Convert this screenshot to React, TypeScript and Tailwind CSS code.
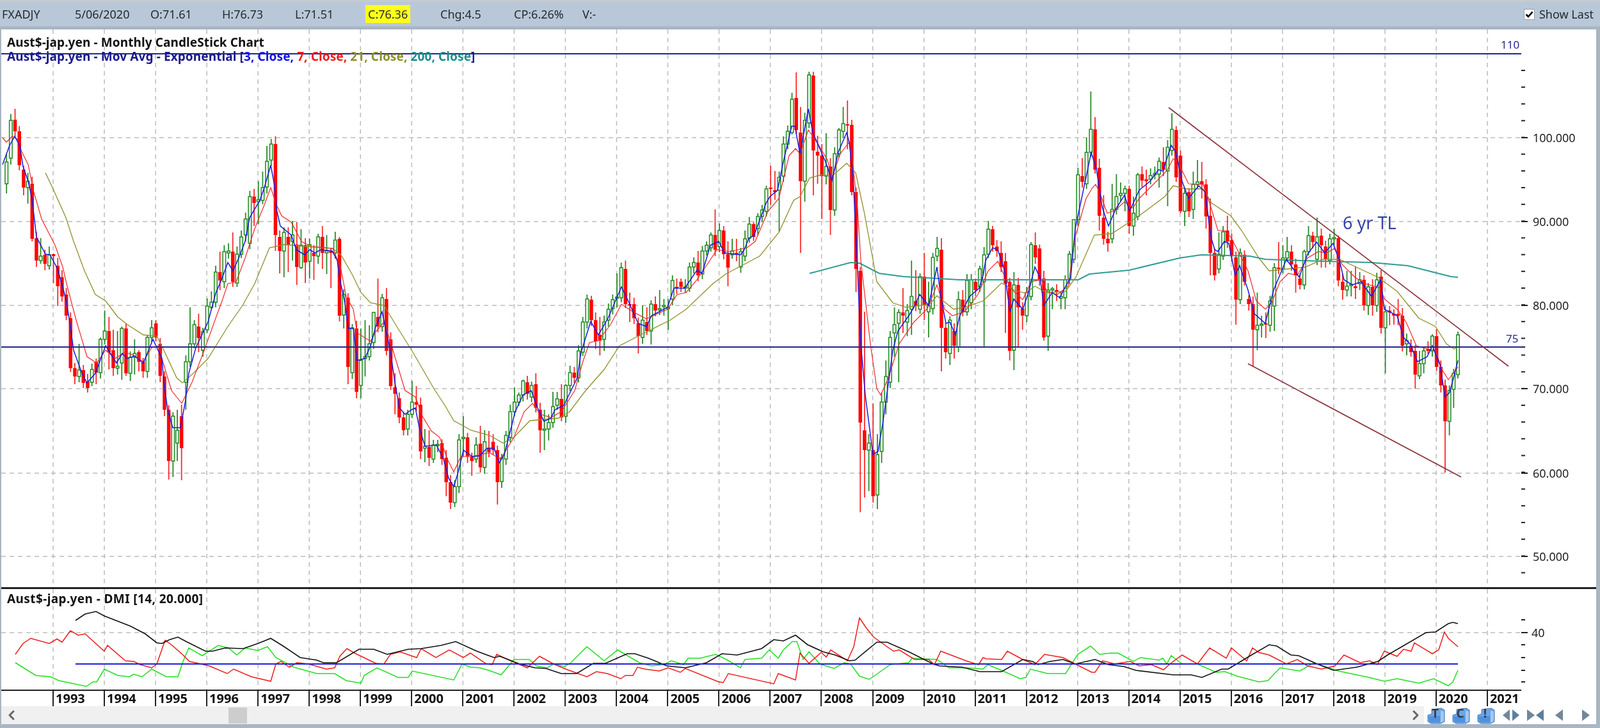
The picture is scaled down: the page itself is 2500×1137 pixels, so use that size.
import React from 'react';
import { ChevronLeft, ChevronRight } from 'lucide-react';

// all chart data below is in page pixels, the svgs use a viewBox that matches the page
const GRID_X = Array.from({ length: 29 }, (_, i) => 83 + i * 80.04);
const GRID_Y = [215, 346, 477, 607, 739, 869];
const YEARS = Array.from({ length: 29 }, (_, i) => 1993 + i);
const PRICE_LABELS = ['100.000', '90.000', '80.000', '70.000', '60.000', '50.000'];
const MINOR_TICKS = Array.from({ length: 31 }, (_, i) => 110 + i * 26.15);
const LOWER_TICKS = [968, 1007, 1027, 1047, 1065];

const QUOTE_CELLS = [
  { text: 'FXADJY', w: 'w-[114px]' },
  { text: '5/06/2020', w: 'w-[118px]' },
  { text: 'O:71.61', w: 'w-[112px]' },
  { text: 'H:76.73', w: 'w-[114px]' },
  { text: 'L:71.51', w: 'w-[110px]' },
  { text: 'C:76.36', w: 'w-[117px]', hot: true },
  { text: 'Chg:4.5', w: 'w-[115px]' },
  { text: 'CP:6.26%', w: 'w-[107px]' },
  { text: 'V:-', w: 'w-[60px]' },
];

// [x, green?, bodyTop, bodyBottom, high, low]  0 = default wick
const CANDLES: number[][] = [
  [3,0,260,290,0,332],[10,1,253,287,240,302],[16,1,188,247,178,0],[23,0,187,205,170,0],[30,0,205,258,197,0],[36,0,265,293,0,305],[43,1,283,293,270,318],
  [50,0,287,373,0,377],[57,0,372,407,0,417],[63,1,400,407,372,412],[70,0,398,412,0,422],[77,1,398,415,385,0],[83,0,397,400,396,442],[90,0,415,447,0,478],
  [96,0,433,463,0,0],[103,0,460,493,0,0],[110,0,497,575,488,0],[116,0,575,588,0,600],[123,1,578,588,537,0],[130,0,578,598,570,0],[137,0,596,606,0,0],
  [143,1,577,597,568,0],[150,0,565,582,560,600],[156,1,530,582,527,0],[163,1,517,530,485,0],[170,0,517,550,495,577],[176,0,547,575,515,587],[183,1,572,575,517,585],
  [190,1,513,567,510,593],[197,0,513,583,505,587],[204,1,558,583,0,595],[210,1,552,558,530,585],[217,0,550,565,547,580],[223,0,565,580,0,590],[230,1,527,580,523,590],
  [237,1,512,527,500,0],[243,0,505,527,500,533],[250,0,537,587,0,0],[256,0,588,640,0,650],[263,0,640,720,0,749],[270,1,650,720,0,745],[277,1,672,692,640,720],
  [283,0,650,700,632,750],[290,1,565,597,0,640],[297,1,537,565,480,0],[303,1,507,537,500,0],[310,0,510,528,490,550],[317,1,518,547,0,0],[323,1,478,515,0,520],
  [330,1,472,480,455,483],[337,1,425,472,0,480],[343,0,425,438,393,453],[350,1,393,440,383,0],[357,1,392,395,380,0],[364,0,393,440,363,0],[370,1,397,442,0,448],
  [377,1,370,397,360,0],[383,1,342,367,332,0],[390,1,307,380,0,0],[397,0,307,317,295,353],[403,1,312,315,283,350],[410,1,293,313,268,0],[417,1,252,292,228,0],
  [423,1,225,250,217,0],[430,0,225,367,213,392],[437,0,370,392,360,427],[443,1,363,392,0,433],[450,0,370,383,355,425],[457,1,367,377,345,407],[463,0,382,417,347,445],
  [470,1,383,418,358,420],[477,0,383,410,372,442],[483,1,382,408,0,435],[490,0,395,400,383,437],[497,1,370,400,365,412],[503,0,370,395,353,420],[510,1,392,395,367,428],
  [517,0,392,395,387,450],[523,1,375,395,362,0],[530,0,373,493,370,502],[537,1,460,492,0,513],[543,0,465,573,0,600],[550,1,512,582,0,0],[557,0,513,612,0,622],
  [563,1,563,602,513,622],[570,1,557,560,500,588],[577,1,537,557,508,0],[584,1,488,535,487,0],[590,0,495,510,435,0],[597,1,465,510,0,0],[604,0,467,548,450,0],
  [610,0,530,603,0,0],[616,0,605,615,583,647],[623,0,622,652,0,0],[630,0,652,672,0,680],[637,1,647,670,0,680],[643,1,628,647,595,0],[650,0,628,632,603,0],
  [657,0,632,705,0,717],[663,1,697,700,670,722],[670,0,698,715,672,728],[677,1,695,717,0,0],[684,1,694,696,0,0],[690,0,692,717,0,0],[697,0,715,753,0,775],
  [704,0,753,785,0,795],[710,1,760,785,0,792],[717,1,687,760,0,0],[724,1,683,685,650,713],[730,0,683,713,0,723],[737,0,713,720,0,743],[744,1,695,717,0,0],
  [750,0,693,730,665,738],[757,1,690,730,672,740],[764,0,700,706,673,0],[770,0,690,703,678,0],[777,0,703,753,0,788],[784,1,715,752,0,0],[790,1,680,717,673,0],
  [797,1,643,683,0,0],[803,1,628,643,605,0],[810,1,617,628,613,0],[817,1,595,617,593,0],[823,0,597,615,587,0],[830,1,602,620,0,0],[837,0,600,637,583,0],
  [844,0,640,672,0,707],[850,1,670,672,640,703],[857,1,660,670,647,688],[864,1,635,660,612,0],[871,1,623,633,612,0],[877,0,623,652,600,0],[884,1,602,650,600,0],
  [890,1,582,602,0,0],[897,0,582,590,573,0],[904,1,548,590,0,0],[910,1,503,550,0,0],[917,1,467,503,0,0],[923,0,468,500,462,0],[930,0,500,533,488,545],
  [937,0,523,532,495,555],[944,1,503,530,0,548],[950,1,483,500,0,0],[957,1,468,482,0,0],[964,1,464,466,427,480],[970,1,418,465,410,0],[977,0,420,475,407,0],
  [983,0,475,477,457,503],[990,0,475,497,0,0],[997,0,505,525,0,552],[1004,1,500,527,477,537],[1010,0,503,517,480,0],[1017,1,475,517,0,538],[1024,0,475,485,463,0],
  [1030,1,482,484,453,0],[1037,1,477,479,467,493],[1044,1,480,482,467,515],[1050,1,438,467,430,0],[1057,0,448,450,435,0],[1063,0,440,448,435,0],[1070,1,448,450,0,0],
  [1077,1,417,450,410,0],[1083,1,410,417,402,0],[1090,0,410,430,392,0],[1097,1,392,428,0,0],[1103,1,383,392,377,0],[1110,1,367,387,363,0],[1117,0,367,390,327,0],
  [1123,1,360,385,0,0],[1130,0,360,397,353,0],[1137,0,397,418,377,447],[1143,1,392,398,373,0],[1150,0,395,398,373,0],[1157,1,393,417,0,0],[1163,1,373,400,360,0],
  [1170,1,350,372,0,0],[1177,0,350,370,347,0],[1183,1,338,357,333,0],[1190,1,328,338,0,0],[1197,1,295,330,290,0],[1203,0,293,295,259,320],[1210,0,297,300,267,312],
  [1217,1,277,297,268,362],[1224,1,225,275,213,0],[1230,1,205,225,0,0],[1237,1,155,207,145,210],[1244,0,153,203,113,0],[1250,0,207,283,167,395],[1257,1,188,283,0,315],
  [1263,1,117,192,112,0],[1271,0,118,235,112,305],[1277,0,237,243,212,287],[1284,0,243,275,225,342],[1291,1,260,275,208,288],[1297,0,260,328,247,367],[1304,1,240,328,230,337],
  [1311,1,203,240,200,0],[1317,1,193,205,167,0],[1324,0,194,196,157,233],[1331,0,195,300,0,305],[1337,0,300,420,0,456],[1345,0,423,660,0,800],[1350,0,672,703,487,777],
  [1357,1,692,703,678,767],[1364,0,703,775,630,785],[1370,1,710,773,678,795],[1377,1,628,705,613,723],[1384,1,588,628,563,647],[1390,1,527,597,517,0],[1397,1,507,520,480,557],
  [1404,1,488,505,483,597],[1411,0,488,493,450,520],[1417,1,485,503,475,525],[1424,1,463,483,407,523],[1431,0,470,478,422,0],[1437,1,432,483,427,0],[1444,0,432,477,395,500],
  [1451,1,477,487,440,527],[1457,1,402,482,395,0],[1464,1,388,400,370,0],[1471,0,390,512,372,580],[1477,0,512,550,0,560],[1484,1,500,552,0,570],[1491,0,517,540,0,560],
  [1498,1,468,542,455,0],[1504,0,468,487,453,0],[1511,1,438,487,428,0],[1517,1,437,473,428,0],[1524,0,440,453,435,0],[1530,1,420,448,415,0],[1537,1,398,440,0,542],
  [1544,1,358,397,345,0],[1551,0,358,383,353,0],[1558,0,385,392,375,0],[1564,0,395,417,377,0],[1570,0,408,443,395,520],[1577,0,440,548,0,563],[1584,1,445,547,425,578],
  [1591,0,445,480,0,543],[1597,0,482,493,0,515],[1604,1,457,493,0,503],[1611,1,382,463,378,0],[1617,0,383,402,363,0],[1624,0,388,437,0,0],[1631,0,435,527,0,532],
  [1637,1,453,525,0,548],[1644,1,451,453,448,483],[1651,0,453,456,0,470],[1657,1,463,466,0,483],[1664,1,437,465,430,483],[1671,1,397,437,392,0],[1677,1,343,405,343,0],
  [1684,1,273,343,0,0],[1691,0,275,284,247,0],[1697,1,238,287,215,0],[1704,1,202,238,143,0],[1711,0,202,265,183,0],[1717,0,262,337,248,360],[1724,0,340,373,305,0],
  [1731,0,373,380,0,393],[1737,1,327,373,287,0],[1744,1,307,327,272,335],[1751,1,302,305,285,0],[1757,1,295,302,290,330],[1764,0,295,353,290,365],[1771,1,333,353,307,368],
  [1777,1,273,338,270,0],[1784,0,272,282,260,0],[1791,0,280,283,265,305],[1797,1,274,280,263,0],[1804,1,271,273,260,0],[1811,1,252,272,0,293],[1817,0,253,265,230,0],
  [1824,1,230,267,0,322],[1831,1,202,235,177,0],[1837,0,203,277,197,0],[1844,0,243,330,0,333],[1851,1,302,330,293,353],[1857,0,300,330,0,0],[1864,1,288,327,268,342],
  [1871,1,284,288,250,0],[1877,0,283,288,253,310],[1884,0,288,338,280,357],[1891,0,337,395,310,430],[1897,0,395,430,0,0],[1904,1,397,420,363,0],[1911,1,362,400,353,0],
  [1917,0,360,377,337,0],[1924,0,375,400,0,0],[1931,0,402,468,0,507],[1937,1,395,468,388,0],[1944,0,398,440,0,0],[1951,0,467,475,0,0],[1957,0,475,515,0,572],
  [1964,1,508,515,457,547],[1971,1,506,508,493,527],[1977,0,505,507,488,528],[1984,1,470,508,0,0],[1991,1,418,478,0,517],[1997,0,418,420,378,0],[2004,1,403,420,383,0],
  [2011,1,393,403,370,0],[2017,0,393,413,0,0],[2024,0,413,430,0,457],[2031,0,435,445,0,452],[2037,1,393,445,390,0],[2044,1,368,393,353,0],[2051,0,368,378,362,0],
  [2057,1,370,405,340,0],[2064,0,368,383,357,418],[2071,0,385,405,0,418],[2077,1,373,407,0,413],[2084,1,371,373,357,0],[2091,0,372,438,368,0],[2097,0,440,453,0,468],
  [2104,1,447,453,423,463],[2111,1,444,446,423,463],[2117,0,447,450,417,467],[2124,1,437,443,425,453],[2131,0,437,477,0,0],[2137,1,448,477,0,492],[2144,0,448,477,0,493],
  [2151,1,437,477,0,0],[2157,0,432,512,422,0],[2164,1,487,512,0,583],[2171,0,485,488,478,508],[2177,0,490,493,0,507],[2184,0,490,493,467,508],[2191,0,493,540,0,0],
  [2197,1,532,537,0,555],[2204,0,540,550,0,0],[2211,0,548,585,0,607],[2217,1,568,587,548,592],[2224,1,548,568,0,583],[2231,0,545,548,533,553],[2237,1,525,548,522,557],
  [2244,0,525,573,0,0],[2251,0,573,602,0,613],[2257,0,602,658,0,738],[2264,1,610,658,0,680],[2271,1,583,608,0,637],[2277,1,523,585,518,0],
];

const EMA3 = '4,257 15,227 23,213 31,228 36,260 44,283 50,310 57,370 71,397 78,398 90,420 103,467 109,503 115,547 128,583 136,598 149,583 165,540 182,567 191,552 199,560 210,556 224,567 239,530 253,560 256,597 262,640 270,668 282,668 290,625 295,583 306,543 325,503 337,458 346,437 356,410 364,423 373,403 383,377 390,340 406,313 413,293 423,258 429,290 432,327 438,353 455,367 463,390 476,398 484,390 492,395 501,390 519,392 527,407 531,437 539,473 544,513 552,513 558,563 570,560 579,540 587,510 597,487 604,520 610,550 618,603 624,637 633,647 643,640 649,637 655,667 664,697 682,695 693,717 701,747 709,760 716,737 724,703 738,713 749,712 761,700 772,700 780,723 788,710 805,643 817,617 830,610 840,637 850,658 861,653 867,640 881,633 902,590 908,550 923,502 935,523 950,497 971,448 983,473 997,505 1010,510 1018,493 1043,480 1053,450 1070,450 1089,422 1097,427 1110,383 1123,377 1132,395 1157,398 1163,390 1170,372 1178,368 1197,317 1203,307 1215,297 1223,257 1237,197 1242,197 1250,240 1263,170 1270,207 1290,253 1300,282 1310,237 1323,207 1327,223 1333,277 1339,400 1345,537 1352,617 1364,710 1372,705 1379,663 1387,607 1395,547 1403,517 1420,493 1428,480 1437,460 1451,477 1464,417 1470,463 1478,505 1484,503 1493,523 1499,495 1515,463 1530,450 1536,430 1540,407 1551,387 1559,390 1569,420 1578,487 1584,467 1598,483 1606,460 1617,417 1625,433 1631,477 1644,457 1656,465 1665,447 1673,433 1680,357 1690,310 1705,238 1713,263 1722,323 1732,353 1743,327 1757,305 1765,330 1780,297 1797,283 1810,265 1817,267 1830,227 1837,237 1847,283 1857,310 1873,290 1883,300 1892,370 1898,390 1903,393 1913,377 1920,380 1930,430 1937,415 1950,453 1960,490 1977,505 1990,453 2010,405 2030,433 2043,397 2057,378 2070,395 2083,380 2093,407 2100,437 2113,445 2127,440 2143,463 2157,437 2163,483 2183,493 2193,527 2203,537 2215,565 2230,557 2238,540 2250,570 2258,620 2265,613 2272,587 2278,563';
const EMA7 = '4,215 10,222 19,213 27,217 34,237 44,257 52,297 65,342 86,383 98,417 105,447 119,500 136,557 151,567 165,547 180,560 195,550 209,555 224,565 237,543 249,540 253,560 268,610 284,630 300,597 318,550 337,497 348,467 356,443 369,440 383,403 398,357 413,320 423,293 432,320 440,337 455,347 471,377 486,385 520,388 532,417 541,463 552,483 558,520 579,533 587,518 600,503 608,527 620,567 633,610 649,620 660,650 674,673 687,683 699,717 709,737 720,713 736,713 765,707 782,717 803,683 819,643 832,630 844,647 861,652 877,643 898,610 910,567 921,535 935,532 954,507 971,475 989,487 1010,498 1043,483 1058,460 1072,457 1089,437 1109,407 1120,390 1140,393 1167,387 1180,377 1200,330 1217,310 1233,243 1243,232 1250,240 1263,203 1277,223 1293,250 1300,277 1313,240 1327,222 1333,260 1340,327 1345,407 1360,537 1370,607 1376,617 1387,593 1405,537 1428,503 1449,482 1464,445 1476,483 1488,493 1507,487 1528,460 1544,423 1559,408 1569,430 1582,453 1598,468 1611,440 1627,437 1636,455 1652,460 1669,447 1680,370 1697,310 1707,293 1712,288 1718,300 1730,333 1743,328 1757,315 1770,325 1780,310 1790,300 1807,283 1823,267 1833,248 1840,252 1857,287 1880,288 1890,317 1903,360 1913,360 1923,370 1937,397 1950,423 1963,470 1977,483 1987,473 2000,440 2013,427 2027,430 2043,403 2060,393 2073,395 2085,388 2097,413 2117,433 2133,443 2157,450 2163,467 2183,483 2197,503 2213,540 2230,545 2243,547 2253,577 2263,593 2278,573';
const EMA21 = '71,270 82,293 103,340 115,377 132,423 149,460 165,470 184,495 199,507 224,523 245,525 256,547 276,590 285,598 302,583 325,560 356,510 379,477 398,443 421,387 444,382 478,385 520,388 534,400 551,430 564,457 579,473 600,477 620,510 645,550 678,607 695,633 709,657 736,672 765,680 786,692 803,683 828,657 873,653 890,643 915,610 944,577 968,540 997,525 1047,500 1072,483 1114,443 1134,428 1187,400 1217,363 1240,313 1250,307 1265,278 1283,273 1300,275 1323,255 1337,270 1350,330 1363,400 1370,440 1395,473 1416,480 1453,475 1464,462 1490,483 1507,480 1536,470 1565,442 1582,452 1602,458 1617,447 1636,457 1665,455 1681,433 1710,367 1737,365 1763,348 1780,337 1820,307 1833,290 1853,295 1880,295 1893,317 1923,337 1940,360 1967,403 1983,423 2013,420 2040,417 2067,405 2093,405 2153,433 2183,455 2217,497 2243,510 2260,537 2272,545 2278,542';
const EMA200 = '1265,427 1329,410 1343,411 1374,427 1412,432 1466,435 1499,437 1594,437 1685,437 1702,428 1764,422 1843,403 1877,398 1953,400 1977,405 2033,407 2143,410 2200,415 2267,432 2278,433';

const DMI_BLACK = '118,969 133,959 150,955 163,962 204,978 227,990 245,1004 253,1005 265,999 278,995 291,1002 321,1017 332,1017 352,1012 380,1013 403,1005 423,997 444,1010 469,1027 495,1031 505,1035 526,1035 561,1014 584,1014 605,1022 638,1014 658,1013 689,1008 712,1002 745,1017 772,1027 781,1025 812,1037 836,1043 853,1044 877,1052 901,1052 927,1036 946,1036 980,1021 992,1021 1013,1028 1042,1040 1071,1043 1104,1035 1128,1021 1152,1023 1190,1013 1209,999 1224,1001 1243,992 1262,1007 1286,1018 1305,1023 1327,1032 1336,1031 1370,1003 1386,1003 1420,1018 1458,1037 1468,1040 1503,1042 1531,1049 1565,1049 1598,1030 1613,1033 1622,1038 1641,1033 1661,1030 1680,1037 1711,1030 1732,1038 1756,1041 1775,1047 1833,1054 1861,1054 1878,1058 1909,1045 1919,1045 1952,1025 1983,1007 1995,1009 2017,1023 2029,1024 2058,1037 2084,1047 2120,1042 2153,1033 2168,1023 2187,1012 2228,988 2243,987 2263,974 2270,972 2278,974';
const DMI_RED = '24,1022 36,1005 48,997 77,1005 89,998 97,1003 110,985 122,992 133,990 163,1017 168,1008 196,1032 209,1033 219,1038 237,1043 245,1037 258,1000 268,1007 286,1023 296,1033 327,1040 355,1052 365,1045 393,1057 423,1064 431,1037 439,1033 452,1042 464,1035 482,1037 510,1045 523,1043 531,1025 542,1013 554,1020 587,1036 600,1037 610,1022 625,1018 651,1027 658,1013 681,1027 702,1015 724,1027 735,1020 760,1037 769,1038 776,1022 798,1032 824,1043 843,1025 865,1037 884,1045 917,1057 932,1049 949,1052 970,1060 977,1055 989,1055 996,1042 1008,1045 1030,1048 1044,1043 1063,1050 1071,1044 1123,1065 1130,1066 1138,1052 1209,1068 1216,1052 1243,1062 1250,1020 1264,1036 1283,1019 1291,1026 1298,1015 1324,1032 1334,1010 1343,965 1353,980 1365,995 1396,1017 1405,1015 1429,1030 1451,1030 1460,1038 1470,1017 1512,1033 1529,1038 1536,1027 1541,1029 1565,1030 1574,1017 1598,1030 1617,1038 1632,1022 1661,1027 1680,1037 1706,1050 1711,1050 1723,1032 1742,1037 1766,1033 1780,1040 1799,1038 1818,1046 1828,1037 1847,1023 1871,1037 1890,1012 1916,1028 1924,1012 1948,1032 1957,1012 1967,1019 1983,1023 2010,1037 2027,1030 2043,1040 2065,1045 2086,1040 2100,1023 2125,1035 2140,1032 2152,1038 2163,1017 2183,1025 2193,1014 2205,1017 2210,1004 2238,1021 2248,1015 2257,987 2263,997 2278,1010';
const DMI_GREEN = '24,1035 56,1055 79,1057 92,1063 135,1072 145,1065 151,1065 163,1045 184,1055 202,1057 209,1053 222,1057 237,1045 260,1057 278,1057 286,1033 295,1012 316,1024 341,1008 357,1012 370,1023 383,1012 403,1016 418,1010 431,1027 459,1042 495,1052 523,1052 541,1063 564,1067 569,1055 589,1043 622,1058 638,1058 644,1048 709,1062 722,1037 735,1042 750,1043 764,1047 783,1054 803,1030 827,1030 838,1040 855,1043 865,1037 882,1041 891,1036 917,1010 944,1032 965,1015 999,1035 1018,1040 1037,1038 1049,1032 1068,1038 1075,1028 1094,1028 1118,1022 1135,1030 1157,1043 1164,1030 1190,1028 1202,1015 1216,1028 1224,1015 1238,1002 1245,1002 1255,1030 1264,1018 1281,1037 1303,1044 1319,1035 1329,1037 1343,1056 1358,1061 1367,1055 1391,1038 1420,1035 1425,1028 1464,1030 1483,1043 1512,1043 1536,1045 1543,1038 1565,1047 1594,1060 1603,1058 1610,1045 1637,1052 1665,1052 1684,1022 1704,1009 1718,1022 1735,1020 1747,1020 1771,1033 1782,1027 1811,1031 1817,1028 1823,1037 1830,1024 1847,1037 1871,1037 1900,1050 1914,1049 1933,1056 1967,1065 1981,1063 2000,1043 2031,1048 2053,1035 2091,1048 2139,1058 2163,1064 2183,1060 2217,1067 2240,1060 2263,1071 2270,1065 2278,1047';

// months nobody read off get a small candle on the blue line
function pointsToXY(pts: string) {
  return pts.split(' ').map(p => p.split(',').map(Number));
}
function yOnLine(line: number[][], x: number) {
  for (let i = 1; i < line.length; i++) {
    if (x <= line[i][0]) {
      const [x0, y0] = line[i - 1];
      const [x1, y1] = line[i];
      return y0 + ((y1 - y0) * (x - x0)) / (x1 - x0);
    }
  }
  return line[line.length - 1][1];
}
function buildCandles() {
  const blue = pointsToXY(EMA3);
  const byMonth = new Map<number, number[]>();
  CANDLES.forEach(c => byMonth.set(Math.round((2278 - c[0]) / 6.67), c));
  const rows: number[][] = [];
  for (let m = 0; m < 341; m++) {
    const x = 2278 - m * 6.67;
    const c = byMonth.get(m);
    if (c) {
      const hi = c[4] || c[2] - 6 - (m % 7);
      const lo = c[5] || c[3] + 6 + (m % 5);
      rows.push([x, c[1], c[2], c[3], hi, lo]);
    } else {
      const y = yOnLine(blue, x);
      rows.push([x, m % 2, y - 5, y + 5, y - 14, y + 14]);
    }
  }
  return rows;
}

const Candles = () => (
  <g>
    {buildCandles().map(([x, up, top, bot, hi, lo]) =>
      up ? (
        <g key={x}>
          <line x1={x} x2={x} y1={hi} y2={lo} stroke="#2a8a2a" strokeWidth="1.8" />
          <rect x={x - 2.25} y={top} width="4.5" height={bot - top} fill="#f6fbf6" stroke="#1f8a1f" strokeWidth="1.5" />
        </g>
      ) : (
        <g key={x}>
          <line x1={x} x2={x} y1={hi} y2={lo} stroke="#fb2a2a" strokeWidth="1.8" />
          <rect x={x - 2.75} y={top} width="5.5" height={bot - top} fill="#ff0606" />
        </g>
      ),
    )}
  </g>
);

const VGrid = ({ y1, y2 }: { y1: number; y2: number }) => (
  <g stroke="#bcbcbc" strokeWidth="1.5" strokeDasharray="7 6">
    {GRID_X.map(x => (
      <line key={x} x1={x} x2={x} y1={y1} y2={y2} />
    ))}
  </g>
);

const HGrid = ({ y }: { y: number }) => (
  <line x1="2" x2="2377" y1={y} y2={y} stroke="#bcbcbc" strokeWidth="1.5" strokeDasharray="7 6" />
);

const PriceChart = () => (
  <svg viewBox="2 46 2492 871" className="block w-full h-[871px]">
    <VGrid y1={46} y2={917} />
    {GRID_Y.map(y => (
      <HGrid key={y} y={y} />
    ))}
    <Candles />
    <polyline points={EMA200} fill="none" stroke="#2f9c96" strokeWidth="2" />
    <polyline points={EMA21} fill="none" stroke="#8f8f2b" strokeWidth="1.3" />
    <polyline points={EMA7} fill="none" stroke="#f2282a" strokeWidth="1.2" />
    <polyline points={EMA3} fill="none" stroke="#1a1ae6" strokeWidth="1.5" />
    <line x1="2" x2="2377" y1="84" y2="84" stroke="#26268f" strokeWidth="2" />
    <line x1="2" x2="2377" y1="542" y2="542" stroke="#26268f" strokeWidth="2" />
    <line x1="1826" y1="168" x2="2357" y2="572" stroke="#8a2f38" strokeWidth="1.6" />
    <line x1="1950" y1="568" x2="2283" y2="745" stroke="#8a2f38" strokeWidth="1.6" />
    <text x="2098" y="358" fontSize="27" fill="#3542a6">6 yr TL</text>
    <text x="2345" y="76" fontSize="17" fill="#26268f">110</text>
    <text x="2353" y="535" fontSize="17" fill="#26268f">75</text>
    {MINOR_TICKS.map(y => (
      <line key={y} x1="2377" x2="2383" y1={y} y2={y} stroke="#222" strokeWidth="2" />
    ))}
    <line x1="2377" x2="2383" y1="542" y2="542" stroke="#222" strokeWidth="2" />
    {GRID_Y.map((y, i) => (
      <g key={y}>
        <line x1="2377" x2="2387" y1={y} y2={y} stroke="#222" strokeWidth="2" />
        <text x="2395" y={y + 7} fontSize="18" fill="#222">{PRICE_LABELS[i]}</text>
      </g>
    ))}
  </svg>
);

const DmiChart = () => (
  <svg viewBox="2 920 2492 157" className="block w-full h-[157px]">
    <VGrid y1={920} y2={1077} />
    <HGrid y={988} />
    <polyline points={DMI_GREEN} fill="none" stroke="#1fe01f" strokeWidth="1.5" />
    <polyline points={DMI_RED} fill="none" stroke="#ee1c1c" strokeWidth="1.5" />
    <polyline points={DMI_BLACK} fill="none" stroke="#111" strokeWidth="1.6" />
    <line x1="118" x2="2278" y1="1037" y2="1037" stroke="#2020dc" strokeWidth="2.2" />
    {LOWER_TICKS.map(y => (
      <line key={y} x1="2377" x2="2383" y1={y} y2={y} stroke="#222" strokeWidth="2" />
    ))}
    <line x1="2377" x2="2387" y1="988" y2="988" stroke="#222" strokeWidth="2" />
    <text x="2393" y="995" fontSize="18" fill="#222">40</text>
  </svg>
);

const LetterBox = ({ letter }: { letter: string }) => (
  <div className="relative w-[28px] h-[27px]">
    <svg width="28" height="27" viewBox="0 0 28 27" className="block">
      <path d="M1 13 L7 11 L7 4 L22 2 L27 5 L27 23 L21 26 L6 26 L1 23 Z" fill="#6ba6e8" stroke="#4a7db8" strokeWidth="1" />
      <path d="M2 15 L20 14 L20 24 L4 24 Z" fill="#4e92e0" />
      <path d="M21 6 L26 7 L26 22 L21 25 Z" fill="#a4c9ef" />
    </svg>
    <span className="absolute left-0 top-[1px] w-[25px] text-center text-[19px] leading-[19px] font-bold text-[#3d3d44]">{letter}</span>
  </div>
);

const NavIcon = ({ points, width }: { points: string[]; width: number }) => (
  <svg width={width} height="18" viewBox={`0 0 ${width} 18`} className="block">
    {points.map((p, i) => (
      <polygon key={p} points={p} fill={i === 0 ? '#71879b' : '#5d7f9f'} />
    ))}
  </svg>
);

export default function App() {
  return (
    <div className="h-screen w-full overflow-hidden flex flex-col bg-[#a9b6c3] font-['Liberation_Sans'] blur-[0.5px]">
      <header className="h-[46px] shrink-0 flex items-center justify-between border-t-[3px] border-b-[5px] border-t-[#c6cbd0] border-b-[#a9b6c3] bg-[#b9c8d8] text-[18px] text-[#252a30]">
        <div className="flex items-center pl-[3px]">
          {QUOTE_CELLS.map(cell => (
            <div key={cell.text} className={cell.w}>
              <span className={cell.hot ? 'bg-[#ffff1a] px-[4px] py-[2px]' : ''}>{cell.text}</span>
            </div>
          ))}
        </div>
        <label className="flex items-center gap-[7px] pr-[10px]">
          <span className="w-[17px] h-[17px] border border-[#9aa3ab] bg-white flex items-center justify-center">
            <svg width="13" height="11" viewBox="0 0 13 11">
              <path d="M1.5 5.5 L5 9 L11.5 1.5" fill="none" stroke="#000" strokeWidth="2.6" />
            </svg>
          </span>
          Show Last
        </label>
      </header>

      <main className="mx-[2px] w-[2492px] h-[1085px] bg-white flex flex-col">
        <section className="relative border-b-[3px] border-[#222]">
          <div className="absolute left-[9px] top-[9px] text-[19px] leading-[22px] font-bold tracking-[0.1px] whitespace-nowrap">
            <div className="text-[#111]">Aust$-jap.yen - Monthly CandleStick Chart</div>
            <div className="text-[#1a1a8c]">
              Aust$-jap.yen - Mov Avg - Exponential [<span className="text-[#1414e6]">3, Close, </span>
              <span className="text-[#f01c1c]">7, Close, </span>
              <span className="text-[#8f8f2b]">21, Close, </span>
              <span className="text-[#1c8f8a]">200, Close</span>]
            </div>
          </div>
          <PriceChart />
        </section>

        <section className="relative">
          <div className="absolute left-[9px] top-[4px] text-[19px] leading-[22px] font-bold tracking-[0.4px] text-[#111] whitespace-nowrap">
            Aust$-jap.yen - DMI [14, 20.000]
          </div>
          <DmiChart />
        </section>

        <div className="h-[26px] w-[2375px] flex border-t-2 border-[#222]">
          <div className="w-[80px] shrink-0" />
          {YEARS.map(year => (
            <div key={year} className="w-[80.04px] shrink-0 border-l-2 border-[#222] pl-[3px] text-[20px] leading-[24px] font-bold text-[#111]">
              {year}
            </div>
          ))}
        </div>

        <div className="h-[28px] flex items-center">
          <div className="w-[2223px] h-full bg-[#f0f0f0] flex items-center">
            <ChevronLeft className="ml-[4px] w-[24px] h-[24px] text-[#666]" strokeWidth={3} />
            <div className="ml-[327px] w-[29px] h-[25px] bg-[#cdcdcd]" />
            <ChevronRight className="ml-auto mr-[1px] w-[24px] h-[24px] text-[#666]" strokeWidth={3} />
          </div>
          <div className="flex-1 h-full flex items-center pl-[5px]">
            <LetterBox letter="T" />
            <div className="ml-[11px]"><LetterBox letter="C" /></div>
            <div className="ml-[11px]"><LetterBox letter="!" /></div>
            <div className="ml-[12px]"><NavIcon width={26} points={['0,9 11,0 11,18', '15,0 26,9 15,18']} /></div>
            <div className="ml-[12px]"><NavIcon width={26} points={['0,0 12,9 0,18', '26,0 14,9 26,18']} /></div>
            <div className="ml-[18px]"><NavIcon width={12} points={['0,9 12,0 12,18']} /></div>
            <div className="ml-[30px]"><NavIcon width={12} points={['0,0 12,9 0,18']} /></div>
          </div>
        </div>
      </main>
    </div>
  );
}
